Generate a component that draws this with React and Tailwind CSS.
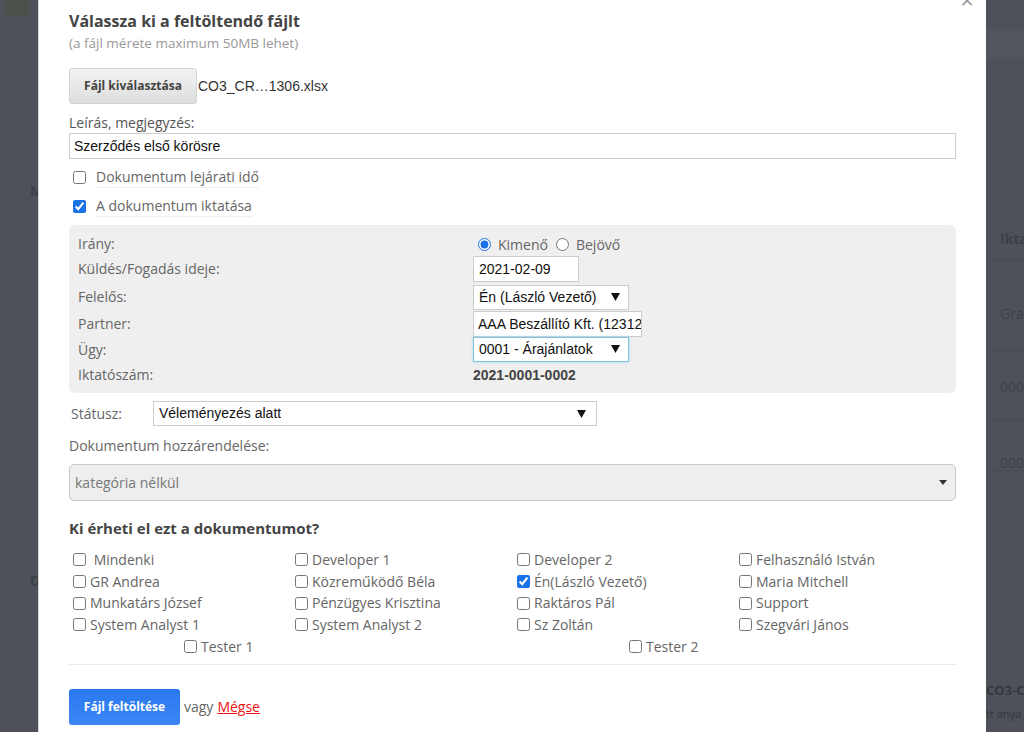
import React from "react";

const labelFont = { fontFamily: '"Open Sans", "Noto Sans", sans-serif' };
const arial = { fontFamily: '"Liberation Sans", Arial, sans-serif' };

const Caret = ({ className = "" }) => (
  <svg width="9" height="8" viewBox="0 0 9 8" className={className}>
    <path d="M0 0 H9 L4.5 8 Z" fill="#111" />
  </svg>
);

const FakeSelect = ({ value, className = "" }) => (
  <div
    className={`flex items-center justify-between border bg-white pl-[5px] pr-[8px] text-[14px] text-[#111] ${className}`}
    style={arial}
  >
    <span className="truncate">{value}</span>
    <Caret />
  </div>
);

const Check = ({ label, checked = false, className = "" }) => (
  <label className={`flex items-center gap-[4px] whitespace-nowrap text-[14px] text-[#666] ${className}`}>
    <input
      type="checkbox"
      defaultChecked={checked}
      className="m-0 h-[13px] w-[13px] shrink-0 accent-[#1a73e8]"
    />
    <span>{label}</span>
  </label>
);

const users = [
  ["Mindenki", "Developer 1", "Developer 2", "Felhasználó István"],
  ["GR Andrea", "Közreműködő Béla", "Én(László Vezető)", "Maria Mitchell"],
  ["Munkatárs József", "Pénzügyes Krisztina", "Raktáros Pál", "Support"],
  ["System Analyst 1", "System Analyst 2", "Sz Zoltán", "Szegvári János"],
];

const Backdrop = () => (
  <div className="absolute inset-0 text-[14px] text-[#3d4047]" style={labelFont}>
    <div className="absolute left-[5px] top-0 h-[16px] w-[24px] rounded-b bg-[#4a5249]" />
    <div className="absolute right-0 top-[30px] h-[28px] w-[40px] bg-[#52555d]" />
    <div className="absolute left-[30px] top-[180px] font-bold">M</div>
    <div className="absolute left-[30px] top-[570px] font-bold">D</div>
    <div className="absolute left-[986px] right-0 top-0 bottom-0 overflow-hidden whitespace-nowrap">
      <div className="absolute left-[14px] top-[228px] font-bold">Ikta</div>
      <div className="absolute left-[14px] top-[303px]">Gra</div>
      <div className="absolute left-[14px] top-[376px]">000</div>
      <div className="absolute left-[14px] top-[452px]">000</div>
      <div className="absolute left-0 right-0 top-[260px] h-px bg-[#474a52]" />
      <div className="absolute left-0 right-0 top-[350px] h-px bg-[#474a52]" />
      <div className="absolute left-0 right-0 top-[420px] h-px bg-[#474a52]" />
      <div className="absolute left-0 right-0 top-[470px] h-px bg-[#474a52]" />
      <div className="absolute left-0 top-[681px] text-[13px] font-bold text-[#35373c]">CO3-C</div>
      <div className="absolute left-0 top-[706px] text-[11px] text-[#35373c]">tt anya</div>
    </div>
  </div>
);

export default function App() {
  return (
    <div className="relative h-[732px] w-full overflow-hidden bg-[#4e5159]">
      <Backdrop />
      <div className="relative flex justify-center">
        <div
          className="relative w-[948px] border-l border-[#d8d8d8] bg-white px-[30px] pt-[10px]"
          style={labelFont}
        >
          <div className="absolute right-[12px] top-[-12px] text-[24px] leading-none text-[#999]">
            ×
          </div>

          <h3 className="text-[16px] font-bold leading-[22px] text-[#444]">
            Válassza ki a feltöltendő fájlt
          </h3>
          <div className="text-[13.5px] leading-[22px] text-[#999]">
            (a fájl mérete maximum 50MB lehet)
          </div>

          <div className="mt-[14px] flex items-center">
            <button className="h-[36px] w-[128px] rounded-[3px] border border-[#d4d4d4] bg-gradient-to-b from-[#f2f2f2] to-[#dedede] text-[12px] font-bold text-[#444]">
              Fájl kiválasztása
            </button>
            <span className="ml-[1px] text-[14px] text-[#333]" style={arial}>
              CO3_CR…1306.xlsx
            </span>
          </div>

          <div className="mt-[9px] text-[14px] leading-[20px] text-[#555]">Leírás, megjegyzés:</div>
          <div
            className="flex h-[26px] items-center border border-[#ccc] px-[4px] text-[14px] text-[#111]"
            style={arial}
          >
            Szerződés első körösre
          </div>

          <div className="mt-[8px] flex flex-col gap-[8px] pl-[4px]">
            <label className="flex items-center gap-[10px] text-[14px] text-[#666]">
              <input type="checkbox" className="m-0 h-[13px] w-[13px] accent-[#1a73e8]" />
              <span className="border-b border-[#f0f0f0] leading-[20px]">Dokumentum lejárati idő</span>
            </label>
            <label className="flex items-center gap-[10px] text-[14px] text-[#666]">
              <input
                type="checkbox"
                defaultChecked
                className="m-0 h-[13px] w-[13px] accent-[#1a73e8]"
              />
              <span className="border-b border-[#f0f0f0] leading-[20px]">A dokumentum iktatása</span>
            </label>
          </div>

          <div className="mt-[8px] rounded-[6px] bg-[#efefef] pb-[5px] pl-[9px] pt-[8px] text-[14px] text-[#666]">
            <div className="grid grid-cols-[395px_1fr] items-center">
              <div className="leading-[22px]">Irány:</div>
              <div className="flex items-center">
                <input
                  type="radio"
                  name="dir"
                  defaultChecked
                  className="m-0 ml-[5px] h-[13px] w-[13px] accent-[#1a73e8]"
                />
                <span className="ml-[7px]">Kimenő</span>
                <input type="radio" name="dir" className="m-0 ml-[8px] h-[13px] w-[13px]" />
                <span className="ml-[7px]">Bejövő</span>
              </div>

              <div className="leading-[28px]">Küldés/Fogadás ideje:</div>
              <div>
                <div
                  className="flex h-[26px] w-[106px] items-center border border-[#ccc] bg-white px-[5px] text-[14px] text-[#111]"
                  style={arial}
                >
                  2021-02-09
                </div>
              </div>

              <div className="leading-[28px]">Felelős:</div>
              <div>
                <FakeSelect value="Én (László Vezető)" className="h-[25px] w-[156px] border-[#ccc]" />
              </div>

              <div className="leading-[26px]">Partner:</div>
              <div>
                <div
                  className="flex h-[26px] w-[169px] items-center overflow-hidden whitespace-nowrap border border-[#ccc] bg-white px-[4px] text-[14px] text-[#111]"
                  style={arial}
                >
                  AAA Beszállító Kft. (12312
                </div>
              </div>

              <div className="leading-[25px]">Ügy:</div>
              <div>
                <FakeSelect
                  value="0001 - Árajánlatok"
                  className="-mt-[1px] h-[25px] w-[156px] border-[#7fc4e0] shadow-[0_0_3px_#a8d8ee]"
                />
              </div>

              <div className="leading-[26px]">Iktatószám:</div>
              <div className="text-[14px] font-bold text-[#444]" style={arial}>
                2021-0001-0002
              </div>
            </div>
          </div>

          <div className="mt-[8px] flex items-center">
            <span className="w-[84px] pl-[2px] text-[14px] text-[#666]">Státusz:</span>
            <FakeSelect value="Véleményezés alatt" className="h-[25px] w-[444px] border-[#ccc] pr-[10px]" />
          </div>

          <div className="mt-[9px] text-[14px] leading-[22px] text-[#666]">Dokumentum hozzárendelése:</div>
          <div className="mt-[7px] flex h-[37px] items-center justify-between rounded-[5px] border border-[#c8c8c8] bg-[#eee] pl-[5px] pr-[8px] text-[14px] text-[#777]">
            <span>kategória nélkül</span>
            <svg width="8" height="5" viewBox="0 0 8 5">
              <path d="M0 0 H8 L4 5 Z" fill="#333" />
            </svg>
          </div>

          <h4 className="mt-[16px] text-[15px] font-bold leading-[22px] text-[#444]">
            Ki érheti el ezt a dokumentumot?
          </h4>

          <div className="mt-[10px] pl-[4px]">
            {users.map((row, i) => (
              <div key={i} className="grid grid-cols-[222px_222px_222px_220px] leading-[21.7px]">
                {row.map((u, j) => (
                  <Check
                    key={u}
                    label={i === 0 && j === 0 ? "\u00a0Mindenki" : u}
                    checked={u === "Én(László Vezető)"}
                  />
                ))}
              </div>
            ))}
            <div className="grid grid-cols-[222px_222px_222px_220px] leading-[21.7px]">
              <Check label="Tester 1" className="pl-[111px]" />
              <div />
              <Check label="Tester 2" className="pl-[112px]" />
              <div />
            </div>
          </div>

          <div className="mt-[6px] h-px bg-[#ebebeb]" />

          <div className="mt-[24px] flex items-center gap-[4px] pb-[20px] text-[14px]">
            <button className="h-[36px] w-[111px] rounded-[3px] bg-gradient-to-b from-[#2a78ee] to-[#3a87f5] text-[12px] font-bold text-white">
              Fájl feltöltése
            </button>
            <span className="text-[#666]">vagy</span>
            <a className="text-[#ee1111] underline">Mégse</a>
          </div>
        </div>
      </div>
    </div>
  );
}
